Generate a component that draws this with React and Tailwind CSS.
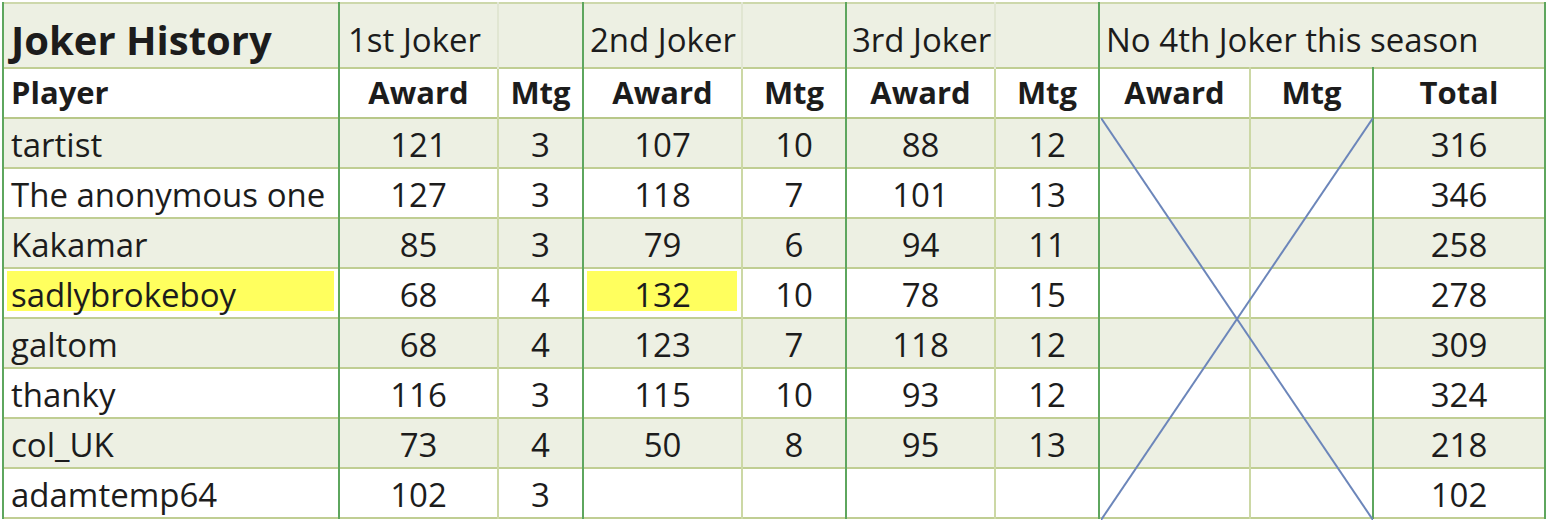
import React from "react";

const rows = [
  ["tartist", 121, 3, 107, 10, 88, 12, 316],
  ["The anonymous one", 127, 3, 118, 7, 101, 13, 346],
  ["Kakamar", 85, 3, 79, 6, 94, 11, 258],
  ["sadlybrokeboy", 68, 4, 132, 10, 78, 15, 278],
  ["galtom", 68, 4, 123, 7, 118, 12, 309],
  ["thanky", 116, 3, 115, 10, 93, 12, 324],
  ["col_UK", 73, 4, 50, 8, 95, 13, 218],
  ["adamtemp64", 102, 3, "", "", "", "", 102],
];

const widths = [336, 159, 85, 159, 104, 149, 104, 151, 123, 172];

// right border of each column: thick green or thin olive
const thick = "border-r-2 border-r-[#5ea65e]";
const thin = "border-r-2 border-r-[#ccd8a5]";
const rightBorder = [thick, thin, thick, thin, thick, thin, thick, thin, thick, thick];

const highlight =
  "bg-[#ffff5e] shadow-[inset_0_-6px_0_#fff,inset_3px_0_0_#fff,inset_-4px_0_0_#fff,inset_0_2px_0_#fff]";

const JokerTable = () => {
  return (
    <table className="table-fixed border-collapse text-[#1c1c1c] font-['Open_Sans',sans-serif]">
      <colgroup>
        {widths.map((w, i) => (
          <col key={i} style={{ width: w }} />
        ))}
      </colgroup>
      <tbody>
        {/* title row */}
        <tr className="h-[65px] bg-[#edf0e3] border-t-2 border-t-[#cdd8ab] border-b-2 border-b-[#c0ce93]">
          <td className="border-l-2 border-l-[#5ea65e] border-r-2 border-r-[#5ea65e] align-bottom pl-[7px] pb-[7px] text-[40px] font-bold leading-none whitespace-nowrap">
            Joker History
          </td>
          <td className="border-r-2 border-r-[#e1e6d2] align-bottom pl-[8px] pb-[11px] text-[33px] leading-none whitespace-nowrap">
            1st Joker
          </td>
          <td className={thick}></td>
          <td className="border-r-2 border-r-[#e1e6d2] align-bottom pl-[6px] pb-[11px] text-[33px] leading-none whitespace-nowrap">
            2nd Joker
          </td>
          <td className={thick}></td>
          <td className="border-r-2 border-r-[#e1e6d2] align-bottom pl-[5px] pb-[11px] text-[33px] leading-none whitespace-nowrap">
            3rd Joker
          </td>
          <td className={thick}></td>
          <td
            colSpan={3}
            className="border-r-2 border-r-[#5ea65e] align-bottom pl-[6px] pb-[11px] text-[33px] leading-none whitespace-nowrap"
          >
            No 4th Joker this season
          </td>
        </tr>

        {/* header row */}
        <tr className="h-[50px] bg-white border-b-2 border-b-[#b8c889]">
          <td className="border-l-2 border-l-[#5ea65e] border-r-2 border-r-[#5ea65e] align-bottom pl-[7px] pb-[9px] text-[31px] font-bold leading-none">
            Player
          </td>
          {["Award", "Mtg", "Award", "Mtg", "Award", "Mtg", "Award", "Mtg", "Total"].map((h, i) => (
            <td
              key={i}
              className={`${rightBorder[i + 1]} align-bottom text-center pb-[9px] text-[31px] font-bold leading-none`}
            >
              {h}
            </td>
          ))}
        </tr>

        {rows.map((r, ri) => {
          const shaded = ri % 2 === 0;
          return (
            <tr
              key={ri}
              className={`h-[50px] border-b-2 border-b-[#c0ce93] ${shaded ? "bg-[#edf0e3]" : "bg-white"}`}
            >
              <td
                className={`border-l-2 border-l-[#5ea65e] border-r-2 border-r-[#5ea65e] align-bottom pl-[7px] pb-[6px] text-[33px] leading-none whitespace-nowrap ${
                  ri === 3 ? highlight : ""
                }`}
              >
                {r[0]}
              </td>
              {[r[1], r[2], r[3], r[4], r[5], r[6], "", "", r[7]].map((v, ci) => (
                <td
                  key={ci}
                  className={`${rightBorder[ci + 1]} align-bottom text-center pb-[6px] text-[33px] leading-none ${
                    ri === 3 && ci === 2 ? highlight : ""
                  }`}
                >
                  {v}
                </td>
              ))}
            </tr>
          );
        })}
      </tbody>
    </table>
  );
};

export default function App() {
  return (
    <div className="relative w-[1547px] h-[520px] overflow-hidden bg-white pt-[2px] pl-[2px]">
      <JokerTable />
      {/* the crossed-out 4th joker columns */}
      <svg
        className="absolute left-[1101px] top-[118px] w-[272px] h-[402px] pointer-events-none"
        viewBox="0 0 272 402"
      >
        <line x1="0" y1="0" x2="272" y2="402" stroke="#6c86ba" strokeWidth="2" />
        <line x1="272" y1="0" x2="0" y2="402" stroke="#6c86ba" strokeWidth="2" />
      </svg>
    </div>
  );
}
